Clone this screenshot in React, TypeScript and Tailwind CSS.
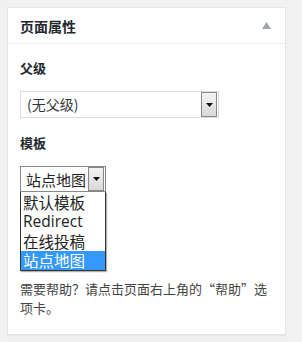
const cjk = "font-['Noto_Sans_CJK_SC','Noto_Sans',sans-serif]"

function SelectArrow() {
  return (
    <span className="flex h-full w-[16px] items-center justify-center border border-[#888] bg-gradient-to-b from-[#f4f4f4] to-[#d8d8d8]">
      <svg width="7" height="4" viewBox="0 0 7 4">
        <path d="M0 0h7L3.5 4z" fill="#111" />
      </svg>
    </span>
  )
}

export default function App() {
  const options = ["默认模板", "Redirect", "在线投稿", "站点地图"]
  return (
    <div className={`min-h-[342px] w-[302px] bg-[#f1f1f1] pt-[7px] pl-[7px] ${cjk}`}>
      <div className="w-[279px] border border-[#e5e5e5] bg-white shadow-[0_1px_1px_rgba(0,0,0,0.04)]">
        <div className="flex h-[36px] items-center justify-between border-b border-[#eee] pl-[12px] pr-[14px]">
          <h2 className="text-[14px] font-bold leading-none text-[#23282d]">页面属性</h2>
          <svg width="9" height="7" viewBox="0 0 9 7">
            <path d="M4.5 0L9 7H0z" fill="#a0a5aa" />
          </svg>
        </div>
        <div className="px-[12px] pb-[17px]">
          <p className="mt-[15px] text-[13px] font-semibold leading-[18px] text-[#23282d]">父级</p>
          <div className="mt-[14px] flex h-[27px] w-[199px] items-center border border-[#ddd] bg-white pl-[6px] pr-[1px]">
            <span className="flex-1 text-[14px] text-[#32373c]">(无父级)</span>
            <SelectArrow />
          </div>
          <p className="mt-[16px] text-[13px] font-semibold leading-[18px] text-[#23282d]">模板</p>
          <div className="mt-[14px] w-[86px]">
            <div className="flex h-[26px] items-center border border-[#888] bg-white pl-[5px] pr-[1px]">
              <span className="flex-1 text-[15px] leading-none text-[#222]">站点地图</span>
              <SelectArrow />
            </div>
            <ul className="border border-t-0 border-[#333] bg-white shadow-[1px_1px_1px_rgba(0,0,0,0.3)]">
              {options.map((o) => (
                <li
                  key={o}
                  className={`flex h-[19.5px] items-center overflow-hidden pl-[2px] text-[15.5px] leading-[18px] ${
                    o === "站点地图" ? "bg-[#3399ff] text-white" : "text-[#222]"
                  } ${o === "Redirect" ? "font-['Open_Sans',sans-serif]" : ""}`}
                >
                  {o}
                </li>
              ))}
            </ul>
          </div>
          <p className="mt-[8px] text-[13px] leading-[19px] text-[#444]">
            需要帮助？请点击页面右上角的“帮助”选项卡。
          </p>
        </div>
      </div>
    </div>
  )
}
